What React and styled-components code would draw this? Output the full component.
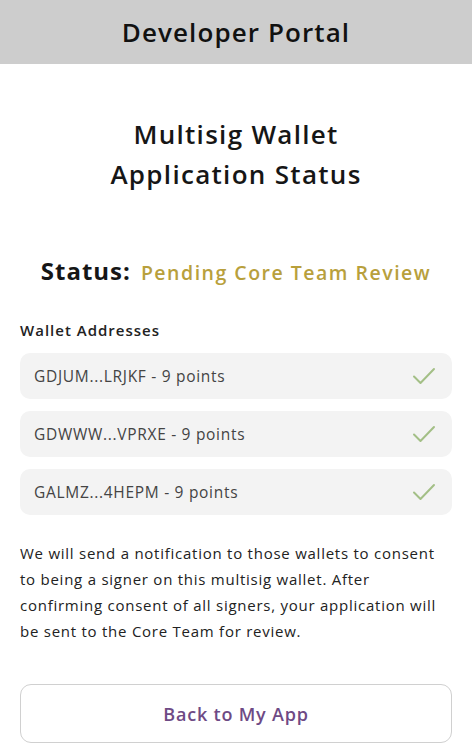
import React from 'react'
import styled, { createGlobalStyle } from 'styled-components';

const GlobalStyle = createGlobalStyle`
    html, body {
        margin: 0;
        padding: 0;
        background: #ffffff;
        font-family: "Open Sans", "Lato", sans-serif;
    }
`;

const Page = styled.div`
    width: 472px;
    min-height: 744px;
    display: flex;
    flex-direction: column;
    background: #ffffff;
`;

const Header = styled.header`
    height: 64px;
    background-color: #cdcdcd;
    display: flex;
    align-items: center;
    justify-content: center;
`;

const HeaderTitle = styled.h1`
    margin: 0;
    font-size: 26px;
    font-weight: 600;
    letter-spacing: 1.1px;
    color: #111;
`;

const Content = styled.main`
    display: flex;
    flex-direction: column;
    padding: 0 20px;
`;

const Title = styled.h2`
    margin: 50px 0 0;
    text-align: center;
    font-size: 26px;
    line-height: 40px;
    font-weight: 600;
    letter-spacing: 1.3px;
    color: #161616;
`;

const StatusLine = styled.div`
    margin-top: 60px;
    display: flex;
    align-items: baseline;
    justify-content: center;
    gap: 10px;
`;

const StatusLabel = styled.span`
    font-size: 24px;
    font-weight: 700;
    letter-spacing: 1px;
    color: #161616;
`;

const StatusValue = styled.span`
    font-size: 19.5px;
    font-weight: 600;
    letter-spacing: 1.5px;
    color: #b8a03c;
`;

const SectionLabel = styled.div`
    margin-top: 33px;
    font-size: 15px;
    font-weight: 600;
    letter-spacing: 1px;
    color: #222;
`;

const List = styled.div`
    margin-top: 13px;
    display: flex;
    flex-direction: column;
    gap: 12px;
`;

const Row = styled.div`
    height: 46px;
    border-radius: 10px;
    background-color: #f3f3f3;
    display: flex;
    align-items: center;
    justify-content: space-between;
    padding: 0 16px 0 14px;
`;

const RowText = styled.span`
    font-size: 15.5px;
    letter-spacing: 0.7px;
    color: #444;
`;

const Check = () => (
    <svg width="24" height="18" viewBox="0 0 24 18" fill="none">
        <path d="M2 9.5 L8.5 16 L22 2" stroke="#a3bf86" strokeWidth="2" strokeLinecap="round" strokeLinejoin="round" />
    </svg>
);

const Note = styled.p`
    margin: 25px 0 0;
    font-size: 15px;
    line-height: 26px;
    letter-spacing: 0.75px;
    color: #222;
`;

const Button = styled.button`
    margin-top: 40px;
    height: 59px;
    border: 1.5px solid #d0d0d0;
    border-radius: 11px;
    background: #ffffff;
    font-family: inherit;
    font-size: 18px;
    font-weight: 600;
    letter-spacing: 0.8px;
    color: #6e4a85;
    cursor: pointer;
`;

const wallets = [
    'GDJUM...LRJKF - 9 points',
    'GDWWW...VPRXE - 9 points',
    'GALMZ...4HEPM - 9 points',
];

const App = () => {
  return (
    <Page>
        <GlobalStyle />
        <Header>
            <HeaderTitle>Developer Portal</HeaderTitle>
        </Header>
        <Content>
            <Title>Multisig Wallet<br />Application Status</Title>
            <StatusLine>
                <StatusLabel>Status:</StatusLabel>
                <StatusValue>Pending Core Team Review</StatusValue>
            </StatusLine>
            <SectionLabel>Wallet Addresses</SectionLabel>
            <List>
                {wallets.map((w) => (
                    <Row key={w}>
                        <RowText>{w}</RowText>
                        <Check />
                    </Row>
                ))}
            </List>
            <Note>
                We will send a notification to those wallets to consent to being a signer on this multisig wallet. After confirming consent of all signers, your application will be sent to the Core Team for review.
            </Note>
            <Button>Back to My App</Button>
        </Content>
    </Page>
  )
}

export default App
